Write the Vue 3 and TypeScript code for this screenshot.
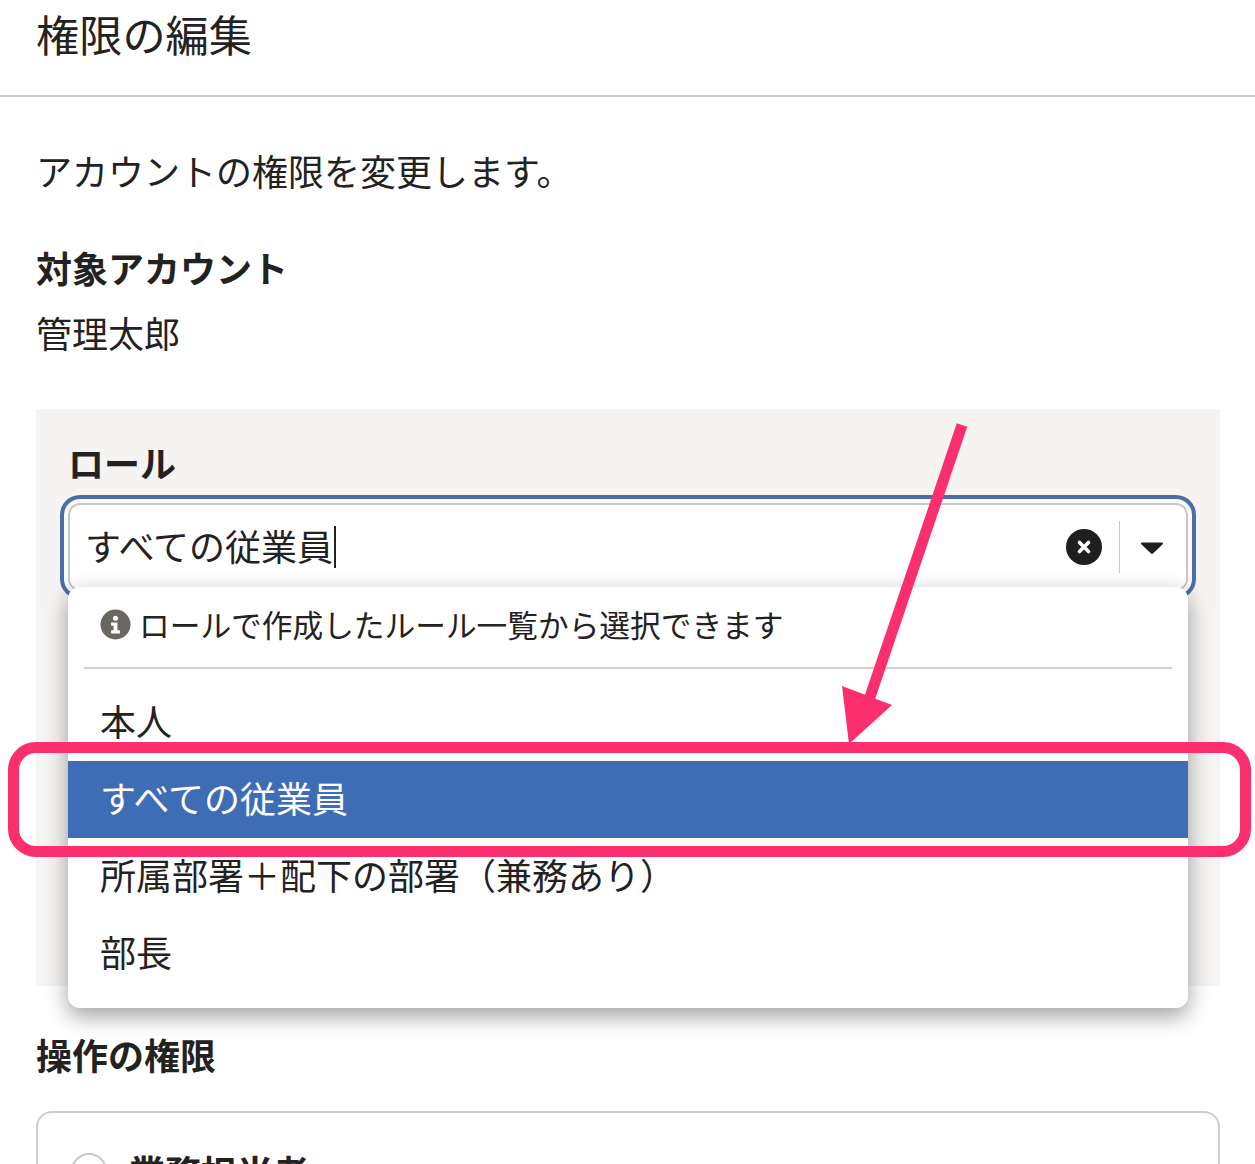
<template>
  <div class="page">
    <header class="page-header">
      <h1 class="page-title">権限の編集</h1>
    </header>

    <main class="page-body">
      <p class="lead">アカウントの権限を変更します。</p>

      <section class="target">
        <h2 class="label">対象アカウント</h2>
        <p class="target-name">管理太郎</p>
      </section>

      <section class="role-panel">
        <h2 class="label role-label">ロール</h2>
        <div class="combo">
          <span class="combo-value"><span class="combo-text">{{ selectedRole }}</span><i class="caret"></i></span>
          <svg class="clear-icon" viewBox="0 0 36 36" aria-hidden="true">
            <circle cx="18" cy="18" r="18" fill="#1f1f1f" />
            <path d="M13.5 13.5 22.5 22.5M22.5 13.5 13.5 22.5" stroke="#fff" stroke-width="3.6" stroke-linecap="round" />
          </svg>
          <span class="combo-divider"></span>
          <svg class="chevron-icon" viewBox="0 0 24 14" aria-hidden="true">
            <path d="M2 1.5h20a1 1 0 0 1 .7 1.7L13 12.6a1.5 1.5 0 0 1-2 0L1.3 3.2A1 1 0 0 1 2 1.5z" fill="#1f1f1f" />
          </svg>
        </div>

        <!-- ドロップダウン -->
        <div class="menu">
          <div class="menu-help">
            <svg class="info-icon" viewBox="0 0 32 32" aria-hidden="true">
              <circle cx="16" cy="16" r="15.5" fill="#6a6762" />
              <circle cx="16" cy="9.5" r="2.6" fill="#fff" />
              <path d="M11.5 14h6.5v8h2.5v3.2h-9v-3.2h2.5v-4.8h-2.5z" fill="#fff" />
            </svg>
            <span>ロールで作成したルール一覧から選択できます</span>
          </div>
          <ul class="menu-list">
            <li
              v-for="role in roles"
              :key="role"
              :class="['menu-item', { 'menu-item-active': role === selectedRole }]"
            >
              {{ role }}
            </li>
          </ul>
        </div>
      </section>

      <section class="permission">
        <h2 class="label">操作の権限</h2>
        <div class="permission-box">
          <span class="radio"></span>
          <span class="permission-name">業務担当者</span>
        </div>
      </section>
    </main>

    <!-- 注釈 -->
    <div class="callout"></div>
    <svg class="arrow" viewBox="0 0 1255 1164" aria-hidden="true">
      <path d="M962 425 869 700" stroke="#fb2f6e" stroke-width="11" fill="none" />
      <path d="M842 686 892 705 849 744z" fill="#fb2f6e" />
    </svg>
  </div>
</template>

<script setup lang="ts">
const roles: string[] = ['本人', 'すべての従業員', '所属部署＋配下の部署（兼務あり）', '部長']
const selectedRole = 'すべての従業員'
</script>

<style>
html,
body {
  margin: 0;
  background: #fff;
}
</style>

<style scoped>
.page {
  position: relative;
  width: 1255px;
  height: 1164px;
  overflow: hidden;
  background: #fff;
  color: #23221f;
  font-family: "Noto Sans CJK JP", "Noto Sans", sans-serif;
  font-size: 36px;
}

.page-header {
  height: 95px;
  padding-left: 36px;
  border-bottom: 2px solid #d0cfcc;
}

.page-title {
  margin: 0;
  font-size: 43.2px;
  font-weight: 400;
  line-height: 66px;
}

.page-body {
  padding: 0 35px 0 36px;
}

.lead {
  margin: 50px 0 0;
  font-size: 36px;
  line-height: 46px;
}

.target {
  margin-top: 51px;
}

.label {
  margin: 0;
  font-size: 36px;
  font-weight: 700;
  line-height: 46px;
}

.target-name {
  margin: 19px 0 0;
  font-size: 36px;
  line-height: 46px;
}

.role-panel {
  position: relative;
  height: 577px;
  margin-top: 54px;
  padding: 30px 32px 0;
  box-sizing: border-box;
  background: #f5f4f2;
}

.combo {
  position: relative;
  display: flex;
  align-items: center;
  width: 1120px;
  height: 88px;
  margin-top: 18px;
  padding: 0 16px 0 15px;
  box-sizing: border-box;
  border: 2px solid #c9c8c5;
  border-radius: 12px;
  background: #fff;
  box-shadow: 0 0 0 4px #fbfbfa, 0 0 0 8px #4a6fa8;
}

.combo-value {
  flex: 1;
  display: flex;
  align-items: center;
}

.combo-text {
  margin-bottom: 4px;
  font-size: 36px;
  line-height: 46px;
}

.caret {
  width: 2px;
  height: 42px;
  margin-left: 1px;
  background: #23221f;
}

.clear-icon {
  width: 36px;
  height: 36px;
  margin-right: 17px;
}

.combo-divider {
  width: 1px;
  height: 52px;
  background: #c9c8c5;
}

.chevron-icon {
  width: 24px;
  height: 14px;
  margin: 2px 6px 0 20px;
}

.menu {
  position: absolute;
  top: 178px;
  left: 32px;
  width: 1120px;
  height: 421px;
  border-radius: 12px;
  background: #fff;
  box-shadow: 0 8px 22px rgba(0, 0, 0, 0.38);
}

.menu-help {
  display: flex;
  align-items: center;
  gap: 8px;
  height: 74px;
  margin: 0 16px;
  padding: 0 0 6px 16px;
  border-bottom: 2px solid #d0cfcc;
  font-size: 30.7px;
  line-height: 40px;
}

.info-icon {
  width: 31px;
  height: 31px;
  margin-top: 1px;
}

.menu-list {
  margin: 15px 0 0;
  padding: 0;
  list-style: none;
}

.menu-item {
  height: 77px;
  padding-left: 32px;
  font-size: 36px;
  line-height: 73px;
}

.menu-item-active {
  background: #3f6db5;
  color: #fff;
}

.permission {
  margin-top: 45px;
}

.permission-box {
  display: flex;
  align-items: flex-start;
  gap: 22px;
  height: 200px;
  margin-top: 34px;
  padding: 40px 33px;
  box-sizing: border-box;
  border: 2px solid #cfcecb;
  border-radius: 16px;
}

.radio {
  flex: none;
  width: 36px;
  height: 36px;
  box-sizing: border-box;
  border: 2px solid #c9c8c5;
  border-radius: 50%;
}

.permission-name {
  margin-top: 5px;
  font-size: 36px;
  font-weight: 700;
  line-height: 26px;
}

.callout {
  position: absolute;
  top: 742px;
  left: 8px;
  width: 1243px;
  height: 115px;
  box-sizing: border-box;
  border: 11px solid #fb2f6e;
  border-radius: 28px;
}

.arrow {
  position: absolute;
  top: 0;
  left: 0;
  width: 1255px;
  height: 1164px;
  pointer-events: none;
}
</style>
